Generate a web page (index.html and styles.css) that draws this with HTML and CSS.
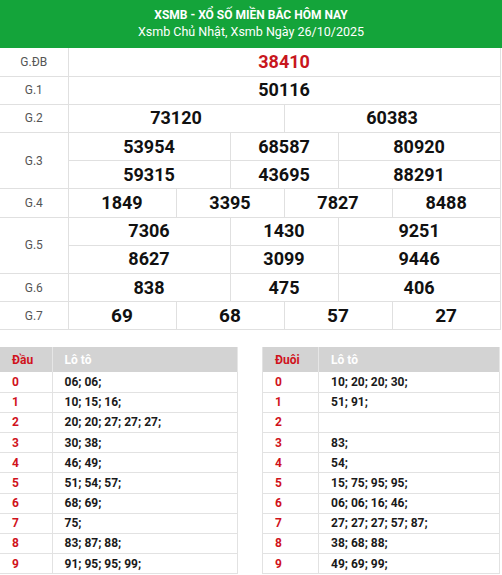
FILE: index.html
```html
<!DOCTYPE html>
<html lang="vi">
<head>
<meta charset="utf-8">
<link rel="stylesheet" href="styles.css">
</head>
<body>
<div class="page">
  <div class="head">
    <div class="title">XSMB - XỔ SỐ MIỀN BẮC HÔM NAY</div>
    <div class="sub">Xsmb Chủ Nhật, Xsmb Ngày 26/10/2025</div>
  </div>
  <table class="kq">
    <colgroup>
      <col class="c-lbl">
      <col class="c"><col class="c"><col class="c"><col class="c"><col class="c"><col class="c">
      <col class="c"><col class="c"><col class="c"><col class="c"><col class="c"><col class="c">
      <col class="c"><col class="c"><col class="c"><col class="c"><col class="c"><col class="c">
      <col class="c"><col class="c"><col class="c"><col class="c"><col class="c"><col class="c">
    </colgroup>
    <tr><td class="lbl red">G.ĐB</td><td colspan="24" class="num red">38410</td></tr>
    <tr><td class="lbl">G.1</td><td colspan="24" class="num">50116</td></tr>
    <tr><td class="lbl">G.2</td><td colspan="12" class="num">73120</td><td colspan="12" class="num">60383</td></tr>
    <tr><td class="lbl" rowspan="2">G.3</td><td colspan="9" class="num">53954</td><td colspan="6" class="num">68587</td><td colspan="9" class="num">80920</td></tr>
    <tr><td colspan="9" class="num">59315</td><td colspan="6" class="num">43695</td><td colspan="9" class="num">88291</td></tr>
    <tr><td class="lbl">G.4</td><td colspan="6" class="num">1849</td><td colspan="6" class="num">3395</td><td colspan="6" class="num">7827</td><td colspan="6" class="num">8488</td></tr>
    <tr><td class="lbl" rowspan="2">G.5</td><td colspan="9" class="num">7306</td><td colspan="6" class="num">1430</td><td colspan="9" class="num">9251</td></tr>
    <tr><td colspan="9" class="num">8627</td><td colspan="6" class="num">3099</td><td colspan="9" class="num">9446</td></tr>
    <tr><td class="lbl">G.6</td><td colspan="9" class="num">838</td><td colspan="6" class="num">475</td><td colspan="9" class="num">406</td></tr>
    <tr><td class="lbl">G.7</td><td colspan="6" class="num big">69</td><td colspan="6" class="num big">68</td><td colspan="6" class="num big">57</td><td colspan="6" class="num big">27</td></tr>
  </table>
  <div class="loto">
    <table class="lt lt-left">
      <tr class="th"><th class="k">Đầu</th><th>Lô tô</th></tr>
      <tr><td class="k">0</td><td>06; 06;</td></tr>
      <tr><td class="k">1</td><td>10; 15; 16;</td></tr>
      <tr><td class="k">2</td><td>20; 20; 27; 27; 27;</td></tr>
      <tr><td class="k">3</td><td>30; 38;</td></tr>
      <tr><td class="k">4</td><td>46; 49;</td></tr>
      <tr><td class="k">5</td><td>51; 54; 57;</td></tr>
      <tr><td class="k">6</td><td>68; 69;</td></tr>
      <tr><td class="k">7</td><td>75;</td></tr>
      <tr><td class="k">8</td><td>83; 87; 88;</td></tr>
      <tr><td class="k">9</td><td>91; 95; 95; 99;</td></tr>
    </table>
    <table class="lt lt-right">
      <tr class="th"><th class="k">Đuôi</th><th>Lô tô</th></tr>
      <tr><td class="k">0</td><td>10; 20; 20; 30;</td></tr>
      <tr><td class="k">1</td><td>51; 91;</td></tr>
      <tr><td class="k">2</td><td></td></tr>
      <tr><td class="k">3</td><td>83;</td></tr>
      <tr><td class="k">4</td><td>54;</td></tr>
      <tr><td class="k">5</td><td>15; 75; 95; 95;</td></tr>
      <tr><td class="k">6</td><td>06; 06; 16; 46;</td></tr>
      <tr><td class="k">7</td><td>27; 27; 27; 57; 87;</td></tr>
      <tr><td class="k">8</td><td>38; 68; 88;</td></tr>
      <tr><td class="k">9</td><td>49; 69; 99;</td></tr>
    </table>
  </div>
</div>
</body>
</html>
```

FILE: styles.css
```css
* { box-sizing: border-box; }
html, body { margin: 0; padding: 0; background: #fff; }
body { font-family: Roboto, "Noto Sans", "Liberation Sans", sans-serif; color: #111; }
.page { width: 502px; }

.head {
  background: #14a43a;
  color: #fff;
  height: 48px;
  text-align: center;
  padding-top: 8px;
}
.title { font-size: 12px; font-weight: 700; line-height: 15px; }
.sub { font-size: 12.5px; font-weight: 400; line-height: 18px; }

.kq {
  width: 500px;
  border-collapse: collapse;
  table-layout: fixed;
}
.kq .c-lbl { width: 68px; }
.kq .c { width: 18px; }
.kq td {
  border: 1px solid #e0e0e0;
  height: 28.2px;
  padding: 0;
  text-align: center;
  vertical-align: middle;
}
.kq tr:first-child td { border-top: none; }
.kq td.lbl { border-left: none; font-size: 12px; color: #555; }
.kq td.num { font-size: 18px; font-weight: 700; color: #111; line-height: 20px; }
.kq td.big { font-size: 19px; }
.kq .red { color: #c8161d; }
.kq td.num.red { color: #c8161d; }

.loto {
  display: flex;
  gap: 24px;
  margin-top: 17px;
}
.lt {
  width: 238px;
  border-collapse: collapse;
  table-layout: fixed;
  font-size: 12px;
}
.lt th, .lt td {
  padding: 0 0 0 12px;
  text-align: left;
  font-weight: 700;
  border-bottom: 1px solid #e2e2e2;
  border-right: 1px solid #e2e2e2;
}
.lt td { height: 20.2px; color: #1a1a1a; }
.lt th { height: 24.5px; background: #d3d3d3; color: #fff; border-right: 1px solid #e6e6e6; border-bottom: none; }
.lt .k { color: #d0121b; }
.lt-left .k { width: 52px; }
.lt-right .k { width: 56px; }
.lt-right th:first-child, .lt-right td:first-child { border-left: 1px solid #e2e2e2; }
```
